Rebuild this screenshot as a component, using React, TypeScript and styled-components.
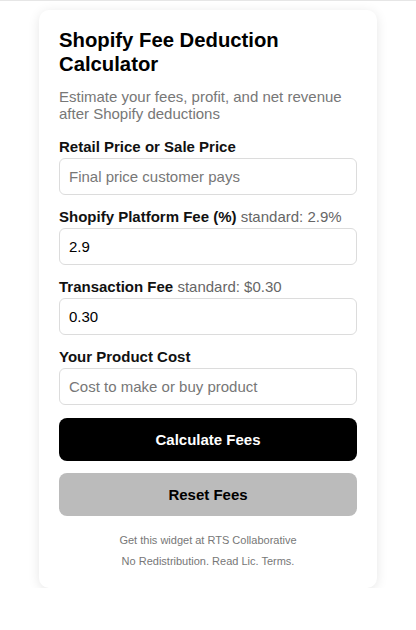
import React, { useState } from 'react';
import styled, { createGlobalStyle } from 'styled-components';

const GlobalStyle = createGlobalStyle`
  html {
    border-top: 1px solid #e6e6e6;
  }
  body {
    margin: 0;
    background: #fff;
    font-family: "Liberation Sans", Arial, sans-serif;
  }
`;

const Card = styled.section`
  box-sizing: border-box;
  width: 338px;
  margin: 9px auto 0;
  padding: 18px 20px 16px;
  background: #fff;
  border-radius: 10px;
  box-shadow: 0 2px 12px rgba(0, 0, 0, 0.1);
`;

const Title = styled.h2`
  margin: 0;
  font-size: 20.3px;
  line-height: 24px;
  font-weight: 700;
  color: #000;
`;

const Subtitle = styled.p`
  margin: 12px 0 16px;
  font-size: 15px;
  line-height: 17px;
  color: #777;
`;

const Field = styled.div`
  display: flex;
  flex-direction: column;
  gap: 3px;
  margin-bottom: 13px;
`;

const Label = styled.label`
  font-size: 15px;
  line-height: 17px;
  font-weight: 700;
  color: #111;

  span {
    font-weight: 400;
    color: #666;
  }
`;

const Input = styled.input`
  box-sizing: border-box;
  width: 100%;
  height: 37px;
  padding: 0 9px;
  border: 1px solid #dcdcdc;
  border-radius: 6px;
  font-family: inherit;
  font-size: 15px;
  color: #000;
  outline: none;

  &::placeholder {
    color: #777;
  }
`;

const Button = styled.button<{ $variant: 'dark' | 'light' }>`
  display: block;
  width: 100%;
  height: 43px;
  border: none;
  border-radius: 8px;
  font-family: inherit;
  font-size: 15px;
  font-weight: 700;
  cursor: pointer;
  background: ${(p) => (p.$variant === 'dark' ? '#000' : '#bbb')};
  color: ${(p) => (p.$variant === 'dark' ? '#fff' : '#000')};
  margin-top: ${(p) => (p.$variant === 'dark' ? '2px' : '12px')};
`;

const Footer = styled.div`
  margin-top: 14px;
  text-align: center;
  font-size: 11px;
  line-height: 21px;
  color: #777;

  p {
    margin: 0;
  }
`;

const App = () => {
  const [price, setPrice] = useState('');
  const [platformFee, setPlatformFee] = useState('2.9');
  const [txFee, setTxFee] = useState('0.30');
  const [cost, setCost] = useState('');

  const reset = () => {
    setPrice('');
    setPlatformFee('2.9');
    setTxFee('0.30');
    setCost('');
  };

  return (
    <>
      <GlobalStyle />
      <Card>
        <Title>Shopify Fee Deduction Calculator</Title>
        <Subtitle>Estimate your fees, profit, and net revenue after Shopify deductions</Subtitle>

        <Field>
          <Label htmlFor="price">Retail Price or Sale Price</Label>
          <Input
            id="price"
            placeholder="Final price customer pays"
            value={price}
            onChange={(e) => setPrice(e.target.value)}
          />
        </Field>

        <Field>
          <Label htmlFor="platform">
            Shopify Platform Fee (%) <span>standard: 2.9%</span>
          </Label>
          <Input id="platform" value={platformFee} onChange={(e) => setPlatformFee(e.target.value)} />
        </Field>

        <Field>
          <Label htmlFor="tx">
            Transaction Fee <span>standard: $0.30</span>
          </Label>
          <Input id="tx" value={txFee} onChange={(e) => setTxFee(e.target.value)} />
        </Field>

        <Field>
          <Label htmlFor="cost">Your Product Cost</Label>
          <Input
            id="cost"
            placeholder="Cost to make or buy product"
            value={cost}
            onChange={(e) => setCost(e.target.value)}
          />
        </Field>

        <Button $variant="dark">Calculate Fees</Button>
        <Button $variant="light" onClick={reset}>
          Reset Fees
        </Button>

        <Footer>
          <p>Get this widget at RTS Collaborative</p>
          <p>No Redistribution. Read Lic. Terms.</p>
        </Footer>
      </Card>
    </>
  );
};

export default App;
